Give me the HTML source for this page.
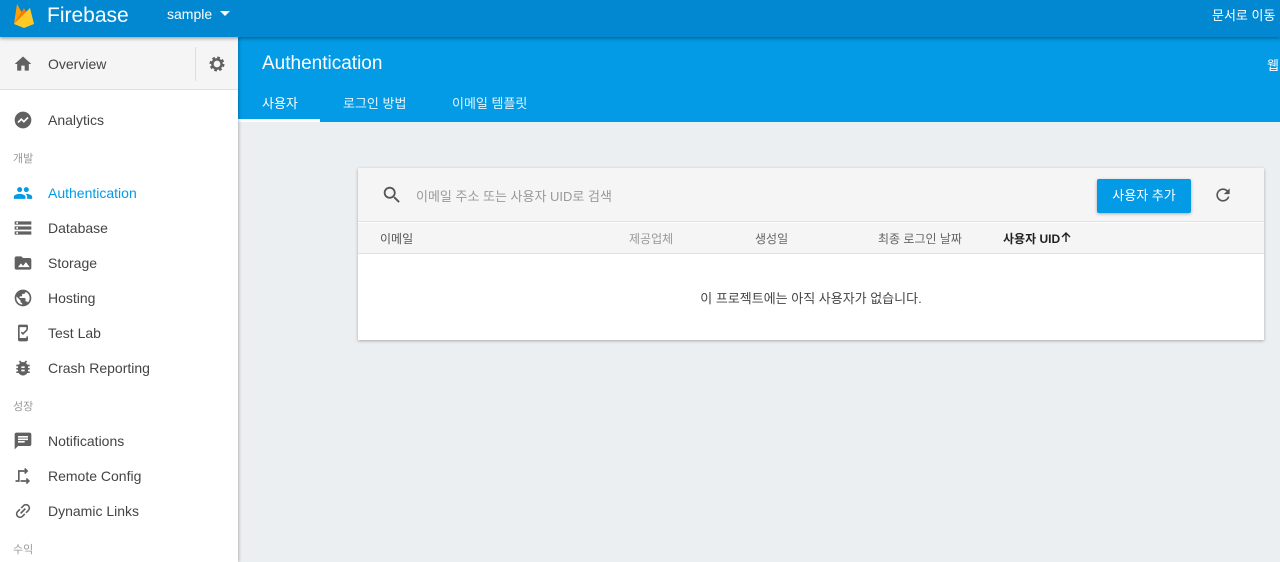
<!DOCTYPE html>
<html><head><meta charset="utf-8"><style>
*{margin:0;padding:0;box-sizing:border-box}
body{width:1280px;height:562px;overflow:hidden;background:#eceff1;font-family:"Liberation Sans","Noto Sans CJK KR",sans-serif;position:relative}
.abs{position:absolute}
#top{left:0;top:0;width:1280px;height:37px;background:#0288d1;z-index:3;box-shadow:0 2px 3px rgba(0,0,0,.3)}
#hdr{left:238px;top:37px;width:1042px;height:85px;background:#039be5}
#side{left:0;top:37px;width:238px;height:525px;background:#fff;z-index:2;box-shadow:1px 0 3px rgba(0,0,0,.25)}
.item{position:absolute;left:0;width:238px;height:30px}
.item svg{position:absolute;left:13px;top:5px;width:20px;height:20px;fill:#616161}
.item span{position:absolute;left:48px;top:7px;font-size:14px;color:#444}
.sec{position:absolute;left:13px;font-size:11px;color:#999}
#card{left:358px;top:168px;width:906px;height:172px;background:#fff;box-shadow:0 1px 3px rgba(0,0,0,.3)}
.th{position:absolute;top:7px;font-size:12px;color:#666}
</style></head><body>
<div id="top" class="abs">
 <svg class="abs" style="left:13px;top:2px" width="22" height="26" viewBox="0 0 22 26"><path d="M1 22 L4 2 L9 11 Z" fill="#ffa000"/><path d="M1 22 L11 6 L14 12 Z" fill="#f57c00"/><path d="M1 22 L17 6 L21 22 L11 26 Z" fill="#ffca28"/></svg>
 <div class="abs" style="left:47px;top:4px;font-size:21px;color:#fff">Firebase</div>
 <div class="abs" style="left:167px;top:6px;font-size:14px;color:#fff">sample</div>
 <svg class="abs" style="left:220px;top:11px" width="12" height="6"><path d="M0 0h10L5 5z" fill="#fff"/></svg>
 <div class="abs" style="left:1212px;top:5px;font-size:13px;color:#fff">문서로 이동</div>
</div>
<div id="hdr" class="abs">
 <div class="abs" style="left:24px;top:16px;font-size:19px;color:#fff">Authentication</div>
 <div class="abs" style="left:1029px;top:18px;font-size:13px;color:#fff">웹</div>
 <div class="abs" style="left:24px;top:56px;font-size:13px;color:#fff">사용자</div>
 <div class="abs" style="left:105px;top:56px;font-size:13px;color:#e1f5fe">로그인 방법</div>
 <div class="abs" style="left:214px;top:56px;font-size:13px;color:#e1f5fe">이메일 템플릿</div>
 <div class="abs" style="left:0;top:82px;width:82px;height:3px;background:#fff"></div>
</div>
<div id="side" class="abs">
 <div class="abs" style="left:0;top:0;width:238px;height:53px;background:#f5f5f5;border-bottom:1px solid #e0e0e0"></div>
 <div class="abs" style="left:195px;top:10px;width:1px;height:34px;background:#ddd"></div>
 <div class="item" style="top:12px"><svg viewBox="0 0 24 24"><path d="M10 20v-6h4v6h5v-8h3L12 3 2 12h3v8z"/></svg><span>Overview</span></div>
 <svg class="abs" style="left:207px;top:17px" width="20" height="20" viewBox="0 0 24 24"><circle cx="12" cy="12" r="7" fill="none" stroke="#616161" stroke-width="4" stroke-dasharray="3 2.5"/><circle cx="12" cy="12" r="5.5" fill="none" stroke="#616161" stroke-width="3"/></svg>
 <div class="item" style="top:68px"><svg viewBox="0 0 24 24"><circle cx="12" cy="12" r="10"/><path d="M6 15l4-4 3 3 5-5" stroke="#fff" stroke-width="2" fill="none"/></svg><span>Analytics</span></div>
 <div class="sec" style="top:113px">개발</div>
 <div class="item" style="top:141px"><svg viewBox="0 0 24 24" style="fill:#039be5"><path d="M16 11c1.66 0 2.99-1.34 2.99-3S17.66 5 16 5c-1.660 0-3 1.34-3 3s1.34 3 3 3zm-8 0c1.66 0 2.99-1.34 2.99-3S9.66 5 8 5C6.34 5 5 6.34 5 8s1.34 3 3 3zm0 2c-2.33 0-7 1.17-7 3.5V19h14v-2.5c0-2.33-4.67-3.5-7-3.5zm8 0c-.29 0-.62.02-.97.05 1.16.84 1.97 1.97 1.97 3.45V19h6v-2.5c0-2.33-4.67-3.5-7-3.5z"/></svg><span style="color:#039be5">Authentication</span></div>
 <div class="item" style="top:176px"><svg viewBox="0 0 24 24"><path d="M2 20h20v-4H2v4zm2-3h2v2H4v-2zM2 4v4h20V4H2zm4 3H4V5h2v2zm-4 7h20v-4H2v4zm2-3h2v2H4v-2z"/></svg><span>Database</span></div>
 <div class="item" style="top:211px"><svg viewBox="0 0 24 24"><path d="M20 6h-8l-2-2H4c-1.1 0-2 .9-2 2v12c0 1.1.9 2 2 2h16c1.1 0 2-.9 2-2V8c0-1.1-.9-2-2-2zM6 17l3.5-4.5 2.5 3 3.5-4.5 4.5 6H6z"/></svg><span>Storage</span></div>
 <div class="item" style="top:246px"><svg viewBox="0 0 24 24"><path d="M12 2C6.48 2 2 6.48 2 12s4.48 10 10 10 10-4.48 10-10S17.52 2 12 2zm-1 17.93c-3.95-.49-7-3.85-7-7.93 0-.62.08-1.21.21-1.79L9 15v1c0 1.1.9 2 2 2v1.93zm6.9-2.54c-.26-.81-1-1.39-1.9-1.39h-1v-3c0-.55-.45-1-1-1H8v-2h2c.55 0 1-.45 1-1V7h2c1.1 0 2-.9 2-2v-.41c2.93 1.19 5 4.06 5 7.41 0 2.08-.8 3.97-2.1 5.39z"/></svg><span>Hosting</span></div>
 <div class="item" style="top:281px"><svg viewBox="0 0 24 24"><path d="M8 2h8a2 2 0 012 2v4h-2V5H8v13h8v-2h2v4a2 2 0 01-2 2H8a2 2 0 01-2-2V4a2 2 0 012-2z"/><path d="M10 11l2 2 5-5" stroke="#616161" stroke-width="2" fill="none"/></svg><span>Test Lab</span></div>
 <div class="item" style="top:316px"><svg viewBox="0 0 24 24"><path d="M20 8h-2.81c-.45-.78-1.07-1.45-1.82-1.96L17 4.41 15.59 3l-2.17 2.17C12.96 5.06 12.49 5 12 5c-.49 0-.96.06-1.41.17L8.41 3 7 4.41l1.62 1.63C7.88 6.55 7.26 7.22 6.81 8H4v2h2.09c-.05.33-.09.66-.09 1v1H4v2h2v1c0 .34.04.67.09 1H4v2h2.81c1.04 1.79 2.97 3 5.19 3s4.15-1.21 5.19-3H20v-2h-2.09c.05-.33.09-.66.09-1v-1h2v-2h-2v-1c0-.34-.04-.67-.09-1H20V8zm-6 8h-4v-2h4v2zm0-4h-4v-2h4v2z"/></svg><span>Crash Reporting</span></div>
 <div class="sec" style="top:361px">성장</div>
 <div class="item" style="top:389px"><svg viewBox="0 0 24 24"><path d="M20 2H4c-1.1 0-2 .9-2 2v18l4-4h14c1.1 0 2-.9 2-2V4c0-1.1-.9-2-2-2zM6 9h12v2H6V9zm8 5H6v-2h8v2zm4-6H6V6h12v2z"/></svg><span>Notifications</span></div>
 <div class="item" style="top:424px"><svg viewBox="0 0 24 24"><path d="M3 18h4V6h10M14 3l3 3-3 3M9 18h10M16 15l3 3-3 3" stroke="#616161" stroke-width="2" fill="none"/></svg><span>Remote Config</span></div>
 <div class="item" style="top:459px"><svg viewBox="0 0 24 24"><g transform="rotate(-45 12 12)"><path d="M3.9 12c0-1.71 1.39-3.1 3.1-3.1h4V7H7c-2.76 0-5 2.24-5 5s2.24 5 5 5h4v-1.9H7c-1.71 0-3.1-1.39-3.1-3.1zM8 13h8v-2H8v2zm9-6h-4v1.9h4c1.71 0 3.1 1.39 3.1 3.1s-1.39 3.1-3.1 3.1h-4V17h4c2.76 0 5-2.24 5-5s-2.24-5-5-5z"/></g></svg><span>Dynamic Links</span></div>
 <div class="sec" style="top:504px">수익</div>
</div>
<div id="card" class="abs">
 <div class="abs" style="left:0;top:0;width:906px;height:54px;background:#f5f5f5;border-bottom:1px solid #e0e0e0"></div>
 <svg class="abs" style="left:23px;top:16px" width="22" height="22" viewBox="0 0 24 24"><path fill="#555" d="M15.5 14h-.79l-.28-.27C15.41 12.59 16 11.11 16 9.5 16 5.91 13.09 3 9.5 3S3 5.91 3 9.5 5.91 16 9.5 16c1.61 0 3.09-.59 4.23-1.57l.27.28v.79l5 4.99L20.49 19l-4.99-5zm-6 0C7.01 14 5 11.99 5 9.5S7.01 5 9.5 5 14 7.01 14 9.5 11.99 14 9.5 14z"/></svg>
 <div class="abs" style="left:58px;top:18px;font-size:13px;color:#999">이메일 주소 또는 사용자 UID로 검색</div>
 <div class="abs" style="left:739px;top:11px;width:94px;height:34px;background:#039be5;border-radius:2px;box-shadow:0 1px 3px rgba(0,0,0,.3);color:#fff;font-size:13px;text-align:center;line-height:34px">사용자 추가</div>
 <svg class="abs" style="left:855px;top:17px" width="20" height="20" viewBox="0 0 24 24"><path fill="#555" d="M17.65 6.35C16.2 4.9 14.21 4 12 4c-4.42 0-7.99 3.58-7.99 8s3.57 8 7.99 8c3.73 0 6.84-2.55 7.73-6h-2.08c-.82 2.33-3.04 4-5.65 4-3.31 0-6-2.69-6-6s2.69-6 6-6c1.66 0 3.14.69 4.22 1.78L13 11h7V4l-2.35 2.35z"/></svg>
 <div class="abs" style="left:0;top:55px;width:906px;height:31px;background:#f5f5f5;border-bottom:1px solid #e0e0e0">
  <div class="th" style="left:22px;color:#555">이메일</div>
  <div class="th" style="left:271px;color:#999">제공업체</div>
  <div class="th" style="left:397px;color:#666">생성일</div>
  <div class="th" style="left:520px;color:#666">최종 로그인 날짜</div>
  <div class="th" style="left:645px;color:#222;font-weight:bold">사용자 UID</div>
  <svg class="abs" style="left:702px;top:8px" width="12" height="12" viewBox="0 0 12 12"><path d="M6 11V2M2 6l4-4 4 4" stroke="#222" stroke-width="1.4" fill="none"/></svg>
 </div>
 <div class="abs" style="left:0;top:120px;width:906px;text-align:center;font-size:13px;color:#444">이 프로젝트에는 아직 사용자가 없습니다.</div>
</div>
</body></html>
